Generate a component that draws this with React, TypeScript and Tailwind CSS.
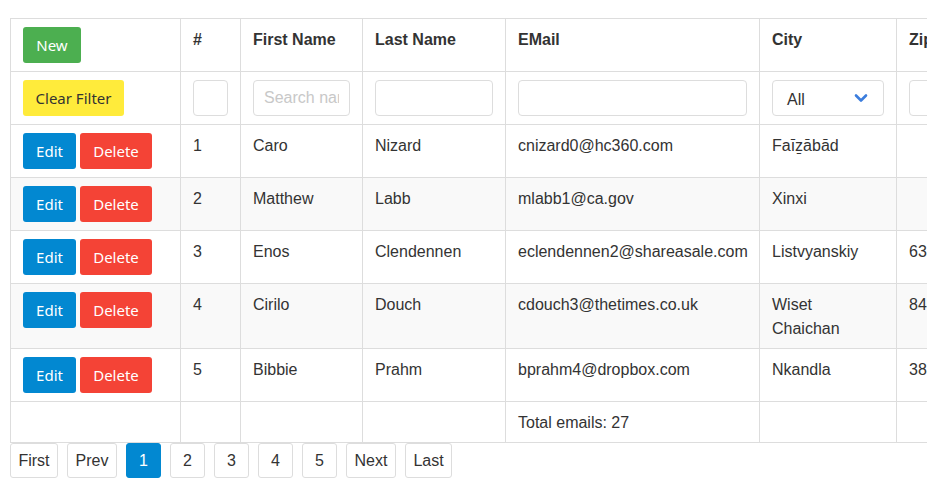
import React from "react";

type Person = {
  id: number;
  first: string;
  last: string;
  email: string;
  city: string;
  zip: string;
};

const people: Person[] = [
  { id: 1, first: "Caro", last: "Nizard", email: "cnizard0@hc360.com", city: "Faīẕābād", zip: "" },
  { id: 2, first: "Matthew", last: "Labb", email: "mlabb1@ca.gov", city: "Xinxi", zip: "" },
  { id: 3, first: "Enos", last: "Clendennen", email: "eclendennen2@shareasale.com", city: "Listvyanskiy", zip: "632" },
  { id: 4, first: "Cirilo", last: "Douch", email: "cdouch3@thetimes.co.uk", city: "Wiset Chaichan", zip: "841" },
  { id: 5, first: "Bibbie", last: "Prahm", email: "bprahm4@dropbox.com", city: "Nkandla", zip: "387" },
];

const btn =
  "h-9 rounded-[3px] text-[15px] font-normal text-center leading-9 font-['Noto_Sans',sans-serif]";
const cell = "border border-[#ddd] px-3 pt-[9px] pb-[7px] align-top";
const ctrl = "border border-[#ddd] px-3 py-2 align-top";
const field =
  "block w-full h-9 rounded-[4px] border border-[#ddd] bg-white px-[10px] text-base outline-none placeholder:text-[#c8c8c8]";

const pages = [
  { label: "First", w: "w-[48px]" },
  { label: "Prev", w: "w-[50px]" },
  { label: "1", w: "w-[35px]" },
  { label: "2", w: "w-[35px]" },
  { label: "3", w: "w-[35px]" },
  { label: "4", w: "w-[35px]" },
  { label: "5", w: "w-[35px]" },
  { label: "Next", w: "w-[50px]" },
  { label: "Last", w: "w-[47px]" },
];

export default function App() {
  return (
    <div className="h-[490px] w-[927px] overflow-hidden bg-white pl-[10px] pt-[18px] font-['Liberation_Sans',Arial,sans-serif] text-base leading-6 text-[#333]">
      <table className="w-[1030px] table-fixed border-collapse">
        <colgroup>
          <col className="w-[170px]" />
          <col className="w-[60px]" />
          <col className="w-[122px]" />
          <col className="w-[143px]" />
          <col className="w-[254px]" />
          <col className="w-[137px]" />
          <col className="w-[144px]" />
        </colgroup>
        <thead>
          <tr className="text-left font-bold">
            <th className={ctrl}>
              <button className={`${btn} w-[58px] bg-[#4caf50] text-white`}>New</button>
            </th>
            <th className={cell}>#</th>
            <th className={cell}>First Name</th>
            <th className={cell}>Last Name</th>
            <th className={cell}>EMail</th>
            <th className={cell}>City</th>
            <th className={cell}>Zip</th>
          </tr>
          <tr>
            <td className={ctrl}>
              <button className={`${btn} w-[101px] bg-[#ffeb3b] text-[#333]`}>Clear Filter</button>
            </td>
            <td className={ctrl}>
              <input className={field} />
            </td>
            <td className={ctrl}>
              <input className={field} placeholder="Search name" />
            </td>
            <td className={ctrl}>
              <input className={field} />
            </td>
            <td className={ctrl}>
              <input className={field} />
            </td>
            <td className={ctrl}>
              <div className="flex h-9 items-center justify-between rounded-[4px] border border-[#ddd] pl-[14px] pr-[15px] pt-[3px]">
                <span>All</span>
                <svg width="14" height="10" viewBox="0 0 14 10" fill="none" className="-mt-[3px]">
                  <path d="M2 2.5l5 5 5-5" stroke="#3b7ddd" strokeWidth="2.6" strokeLinecap="round" strokeLinejoin="round" />
                </svg>
              </div>
            </td>
            <td className={ctrl}>
              <input className={field} />
            </td>
          </tr>
        </thead>
        <tbody>
          {people.map((p, i) => (
            <tr key={p.id} className={i % 2 === 1 ? "bg-[#f9f9f9]" : "bg-white"}>
              <td className={ctrl}>
                <div className="flex gap-1">
                  <button className={`${btn} w-[53px] bg-[#0288d1] text-white`}>Edit</button>
                  <button className={`${btn} w-[72px] bg-[#f44336] text-white`}>Delete</button>
                </div>
              </td>
              <td className={cell}>{p.id}</td>
              <td className={cell}>{p.first}</td>
              <td className={cell}>{p.last}</td>
              <td className={cell}>{p.email}</td>
              <td className={cell}>{p.city}</td>
              <td className={cell}>{p.zip}</td>
            </tr>
          ))}
          <tr>
            <td className={cell}></td>
            <td className={cell}></td>
            <td className={cell}></td>
            <td className={cell}></td>
            <td className={cell}>Total emails: 27</td>
            <td className={cell}></td>
            <td className={cell}></td>
          </tr>
        </tbody>
      </table>

      <div className="flex gap-[9px]">
        {pages.map(({ label, w }) => (
          <button
            key={label}
            className={
              label === "1"
                ? `h-[35px] ${w} rounded-[3px] border border-[#0288d1] bg-[#0288d1] text-white`
                : `h-[35px] ${w} rounded-[3px] border border-[#ddd] bg-white text-[#333]`
            }
          >
            {label}
          </button>
        ))}
      </div>
    </div>
  );
}
